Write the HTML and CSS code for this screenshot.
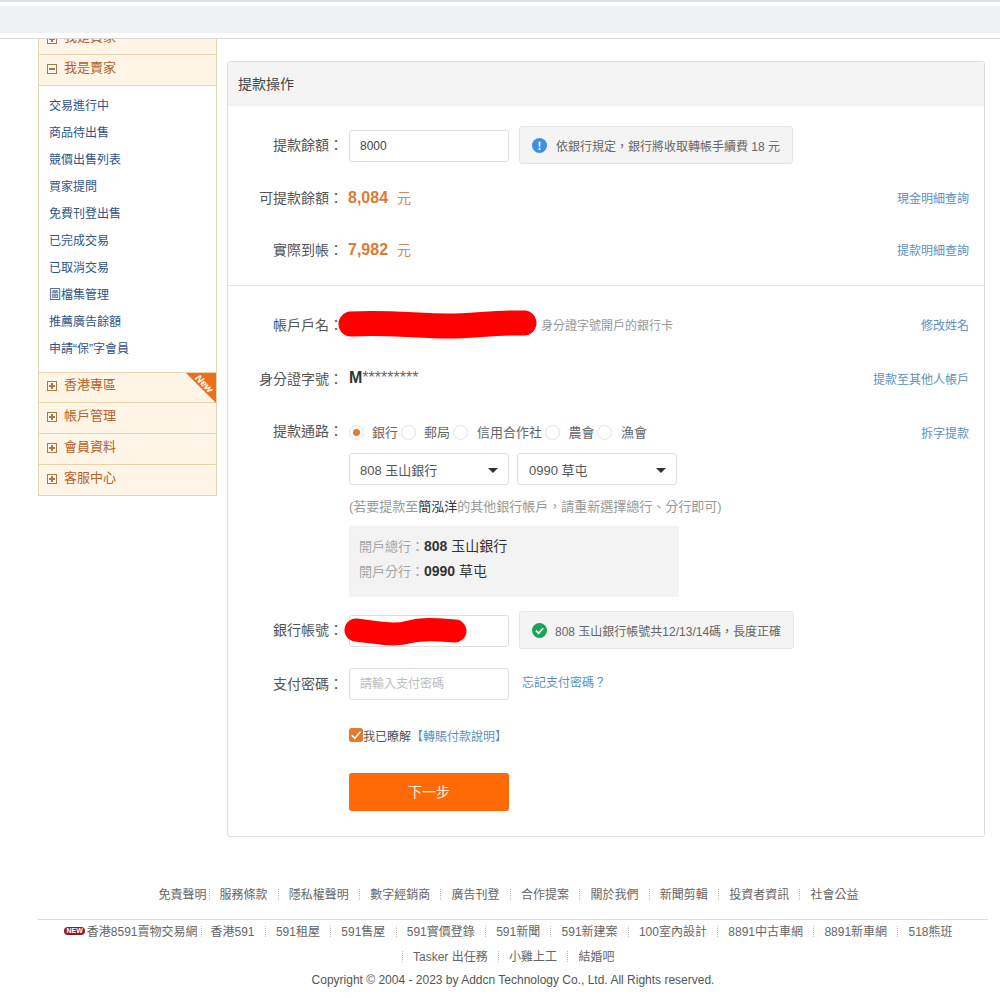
FILE: index.html
```html
<!DOCTYPE html>
<html lang="zh-Hant">
<head>
<meta charset="utf-8">
<title>提款操作</title>
<link rel="stylesheet" href="styles.css">
</head>
<body>
<header class="top"><div class="top-inner"></div></header>
<main class="main">
  <aside class="side">
    <div class="head clipped"><i class="box plus"></i><span>我是買家</span></div>
    <div class="head"><i class="box minus"></i><span>我是賣家</span></div>
    <ul class="menu">
      <li>交易進行中</li><li>商品待出售</li><li>競價出售列表</li><li>買家提問</li><li>免費刊登出售</li>
      <li>已完成交易</li><li>已取消交易</li><li>圖檔集管理</li><li>推薦廣告餘額</li><li>申請“保”字會員</li>
    </ul>
    <div class="head new-head"><i class="box plus"></i><span>香港專區</span><b class="ribbon"></b><b class="ribbon-text">New</b></div>
    <div class="head"><i class="box plus"></i><span>帳戶管理</span></div>
    <div class="head"><i class="box plus"></i><span>會員資料</span></div>
    <div class="head last"><i class="box plus"></i><span>客服中心</span></div>
  </aside>
  <section class="panel">
    <h2 class="panel-head">提款操作</h2>
    <div class="sec sec-a">
      <div class="row r38">
        <label class="lbl">提款餘額：</label>
        <input class="field" type="text" value="8000">
        <div class="tip">
          <svg class="ico" viewBox="0 0 16 16"><circle cx="8" cy="8" r="8" fill="#3f8fe0"/><rect x="7.1" y="3.6" width="1.8" height="5.8" rx=".9" fill="#fff"/><circle cx="8" cy="11.6" r="1.1" fill="#fff"/></svg>
          <span>依銀行規定，銀行將收取轉帳手續費 18 元</span>
        </div>
      </div>
      <div class="row r36 mt16">
        <span class="lbl">可提款餘額：</span>
        <b class="amt">8,084</b><span class="unit">元</span>
        <a class="rlink">現金明細查詢</a>
      </div>
      <div class="row r36 mt16">
        <span class="lbl">實際到帳：</span>
        <b class="amt">7,982</b><span class="unit">元</span>
        <a class="rlink">提款明細查詢</a>
      </div>
    </div>
    <div class="sec sec-b">
      <div class="row r36">
        <span class="lbl">帳戶戶名：</span>
        <span class="hint">身分證字號開戶的銀行卡</span>
        <a class="rlink">修改姓名</a>
        <svg class="blob blob-a" viewBox="0 0 200 28"><path d="M13 14 C50 12 80 16 110 16 C135 16 160 12 186 13" fill="none" stroke="#fe0000" stroke-width="25" stroke-linecap="round"/></svg>
      </div>
      <div class="row r36 mt18">
        <span class="lbl">身分證字號：</span>
        <span class="idno"><b>M</b>*********</span>
        <a class="rlink">提款至其他人帳戶</a>
      </div>
      <div class="row top-row mt17">
        <span class="lbl lbl36">提款通路：</span>
        <div class="col">
          <div class="radios">
            <i class="radio on"></i><span class="rt">銀行</span>
            <i class="radio"></i><span class="rt">郵局</span>
            <i class="radio"></i><span class="rt wide">信用合作社</span>
            <i class="radio"></i><span class="rt wide">農會</span>
            <i class="radio"></i><span class="rt wide">漁會</span>
          </div>
          <div class="selects">
            <div class="sel"><select><option>808 玉山銀行</option></select></div>
            <div class="sel"><select><option>0990 草屯</option></select></div>
          </div>
          <p class="note">(若要提款至<b>簡泓洋</b>的其他銀行帳戶，請重新選擇總行、分行即可)</p>
          <div class="bank">
            <p><span>開戶總行：</span><b>808</b> 玉山銀行</p>
            <p><span>開戶分行：</span><b>0990</b> 草屯</p>
          </div>
        </div>
        <a class="rlink rlink-top">拆字提款</a>
      </div>
      <div class="row r38 mt14">
        <span class="lbl">銀行帳號：</span>
        <input class="field" type="text">
        <div class="tip tip-ok">
          <svg class="ico" viewBox="0 0 16 16"><circle cx="8" cy="8" r="8" fill="#18a558"/><path d="M4.2 8.2 7 11l4.9-5.4" fill="none" stroke="#fff" stroke-width="1.9"/></svg>
          <span>808 玉山銀行帳號共12/13/14碼，長度正確</span>
        </div>
        <svg class="blob blob-b" viewBox="0 0 124 30"><path d="M12 14 C35 17 50 20 65 16 C80 12 95 14 111 15" fill="none" stroke="#fe0000" stroke-width="23" stroke-linecap="round"/></svg>
      </div>
      <div class="row r32 mt19">
        <span class="lbl">支付密碼：</span>
        <input class="field" type="password" placeholder="請輸入支付密碼">
        <a class="forgot">忘記支付密碼？</a>
      </div>
      <div class="row r36 mt17">
        <span class="lbl"></span>
        <svg class="check" viewBox="0 0 14 14"><rect width="14" height="14" rx="2.5" fill="#e37a2c"/><path d="M2.8 7.2 5.8 10.4 11.4 3.8" fill="none" stroke="#fff" stroke-width="1.6"/></svg>
        <span class="agree">我已瞭解<a>【轉賬付款說明】</a></span>
      </div>
      <div class="row mt20">
        <span class="lbl"></span>
        <button class="next" type="button">下一步</button>
      </div>
    </div>
  </section>
</main>
<footer class="foot">
  <div class="links l1">
    <a>免責聲明</a><i class="sep first"></i><a>服務條款</a><i class="sep"></i><a>隱私權聲明</a><i class="sep"></i><a>數字經銷商</a><i class="sep"></i><a>廣告刊登</a><i class="sep"></i><a>合作提案</a><i class="sep"></i><a>關於我們</a><i class="sep"></i><a>新聞剪輯</a><i class="sep"></i><a>投資者資訊</a><i class="sep"></i><a>社會公益</a>
  </div>
  <div class="links l2">
    <b class="newb">NEW</b><a>香港8591賣物交易網</a><i class="sep first"></i><a>香港591</a><i class="sep"></i><a>591租屋</a><i class="sep"></i><a>591售屋</a><i class="sep"></i><a>591實價登錄</a><i class="sep"></i><a>591新聞</a><i class="sep"></i><a>591新建案</a><i class="sep"></i><a>100室內設計</a><i class="sep"></i><a>8891中古車網</a><i class="sep"></i><a>8891新車網</a><i class="sep"></i><a>518熊班</a>
  </div>
  <div class="links l3">
    <i class="sep"></i><a>Tasker 出任務</a><i class="sep"></i><a>小雞上工</a><i class="sep"></i><a>結婚吧</a>
  </div>
  <p class="copy">Copyright © 2004 - 2023 by Addcn Technology Co., Ltd. All Rights reserved.</p>
</footer>
</body>
</html>
```

FILE: styles.css
```css
* { box-sizing: border-box; }
html, body { margin: 0; padding: 0; height: 998px; overflow: hidden; background: #fff; }
body { font-family: "Liberation Sans", "Noto Sans CJK TC", sans-serif; font-size: 12px; color: #555; }
p, h2, ul { margin: 0; padding: 0; }
i, b.ribbon { font-style: normal; }

.top { height: 39px; border-top: 2px solid #dcdde1; border-bottom: 1px solid #d9d9d9; padding: 4px 0 5px; }
.top-inner { height: 27px; background: #f0f1f3; }

.main { display: flex; align-items: flex-start; padding-left: 38px; gap: 10px; }

.side { width: 179px; border: 1px solid #e8d5ad; border-top: 0; background: #fff; }
.head { position: relative; display: flex; align-items: center; gap: 7px; height: 31px; padding: 0 0 3px 8px; background: #fef5e6; color: #b5622a; font-size: 13px; border-bottom: 1px solid #e8d5ad; }
.head span { margin-bottom: 5px; }
.head.clipped { height: 16px; padding-bottom: 0; align-items: flex-end; line-height: 30px; overflow: hidden; }
.head.clipped .box { margin-bottom: 10px; }
.head.clipped span { height: 30px; margin-bottom: 2px; }
.head.new-head { border-top: 1px solid #e8d5ad; height: 31px; }
.head.last { border-bottom: 0; height: 30px; }
.box { position: relative; display: block; width: 10px; height: 10px; border: 1px solid #a8784a; background: #fff8ee; flex: none; }
.box::before { content: ""; position: absolute; left: 1px; right: 1px; top: 3px; height: 2px; background: #a8784a; }
.box.plus::after { content: ""; position: absolute; top: 1px; bottom: 1px; left: 3px; width: 2px; background: #a8784a; }
.ribbon { position: absolute; top: 0; right: 0; width: 0; height: 0; border-top: 30px solid #e9701c; border-left: 30px solid transparent; }
.ribbon-text { position: absolute; top: 5px; right: 1px; color: #fff; font-size: 10px; font-weight: bold; font-style: italic; line-height: 11px; transform: rotate(45deg); }

.menu { list-style: none; padding: 7px 0 9px 10px; color: #2f5486; }
.menu li { height: 27px; line-height: 27px; }

.panel { width: 758px; margin-top: 22px; border: 1px solid #dedede; border-radius: 3px; background: #fff; }
.panel-head { height: 44px; padding-left: 10px; line-height: 44px; font-size: 14px; font-weight: normal; color: #444; background: #f4f4f4; }

.sec { padding-right: 15px; }
.sec-a { padding-top: 20px; padding-bottom: 17px; border-bottom: 1px solid #e3e3e3; }
.sec-b { padding-top: 21px; padding-bottom: 25px; }

.row { position: relative; display: flex; align-items: center; }
.r38 { height: 38px; }
.r36 { height: 36px; }
.r32 { height: 32px; }
.top-row { align-items: flex-start; }
.mt14 { margin-top: 14px; }
.mt16 { margin-top: 16px; }
.mt17 { margin-top: 17px; }
.mt18 { margin-top: 18px; }
.mt19 { margin-top: 19px; }
.mt20 { margin-top: 20px; }

.lbl { flex: none; width: 121px; padding: 0 6px 2px 0; text-align: right; font-size: 14px; color: #555; }
.lbl36 { line-height: 36px; padding-bottom: 0; margin-top: -1px; }

.field { width: 160px; height: 32px; padding: 0 10px; border: 1px solid #dfdfdf; border-radius: 3px; font: inherit; font-size: 12px; color: #444; background: #fff; outline: 0; }
.r38 .field { margin-top: 2px; }
.field::placeholder { color: #bbb; }

.tip { display: flex; align-items: center; gap: 9px; height: 38px; margin-left: 10px; padding: 0 12px 0 12px; background: #f4f4f4; border: 1px solid #e6e6e6; border-radius: 3px; color: #666; }
.tip-ok { gap: 8px; }
.ico { display: block; width: 15px; height: 15px; flex: none; }

.amt { margin-left: -1px; font-size: 16px; color: #df7a33; }
.unit { margin: -3px 0 0 9px; font-size: 14px; color: #c98c60; }
.rlink { margin: 0 0 2px auto; color: #5b90bd; }
.rlink-top { margin-top: 10px; }
.hint { margin: 0 0 2px 192px; color: #999; }
.idno { font-size: 16px; color: #666; line-height: 14px; margin-top: -3px; }
.idno b { color: #333; }

.blob { position: absolute; display: block; overflow: visible; }
.blob-a { left: 110px; top: 3px; width: 200px; height: 28px; }
.blob-b { left: 116px; top: 5px; width: 124px; height: 30px; }

.col { width: 400px; }
.radios { display: flex; align-items: center; height: 36px; font-size: 13px; color: #666; }
.radio { position: relative; display: block; flex: none; width: 15px; height: 15px; border: 1px solid #e3e3e3; border-radius: 50%; background: #fff; }
.radio.on::after { content: ""; position: absolute; left: 3px; top: 3px; width: 7px; height: 7px; border-radius: 50%; background: #df7a33; }
.rt { margin: 0 3px 2px 8px; }
.rt.wide { margin: 0 2.5px 2px 9px; }

.selects { display: flex; gap: 8px; margin-top: 3px; }
.sel { position: relative; width: 160px; height: 32px; }
.sel::after { content: ""; position: absolute; right: 11px; top: 15px; border-top: 5px solid #333; border-left: 5px solid transparent; border-right: 5px solid transparent; }
.sel select { appearance: none; -webkit-appearance: none; width: 100%; height: 100%; padding: 2px 10px 0; border: 1px solid #dfdfdf; border-radius: 3px; background: #fff; font: inherit; font-size: 13px; color: #555; outline: 0; }
.sel + .sel select { padding-left: 11px; }

.note { margin-top: 12px; height: 20px; line-height: 20px; font-size: 13px; color: #999; white-space: nowrap; }
.note b { font-weight: normal; color: #333; }
.bank { width: 330px; height: 71px; margin-top: 9px; padding: 8px 10px; background: #f3f3f3; }
.bank p { height: 25px; line-height: 25px; font-size: 14px; color: #333; }
.bank span { font-size: 13px; color: #a5a5a5; }
.bank b { color: #333; }

.forgot { margin-left: 13px; margin-top: -6px; color: #5b90bd; }
.check { display: block; flex: none; width: 14px; height: 14px; }
.agree { color: #555; }
.agree a { color: #5b90bd; }
.next { width: 160px; height: 38px; padding: 0 0 2px; border: 0; border-radius: 3px; background: #ff6a06; color: #fff3e0; font: inherit; font-size: 14px; }

.foot { width: 950px; margin: 47px 0 0 38px; color: #666; }
.links { display: flex; justify-content: center; align-items: center; height: 20px; line-height: 20px; padding-right: 9px; white-space: nowrap; }
.links a { padding-top: 2px; }
.l1 { height: 36px; padding-bottom: 15px; border-bottom: 1px solid #dcdcdc; }
.l2 { margin-top: 1px; }
.l3 { margin-top: 5px; padding-right: 20px; }
.sep { display: block; flex: none; width: 1px; height: 11px; margin: 0 10.2px; border-left: 1px dotted #bbb; }
.sep.first { margin: 0 9px 0 3px; }
.newb { display: block; height: 8px; margin: -1px 2px 0 0; padding: 0 2px; border-radius: 4px; background: #8e1a25; color: #fff; font-size: 7px; line-height: 8px; }
.copy { margin-top: 4px; height: 20px; line-height: 20px; text-align: center; color: #555; }
```
